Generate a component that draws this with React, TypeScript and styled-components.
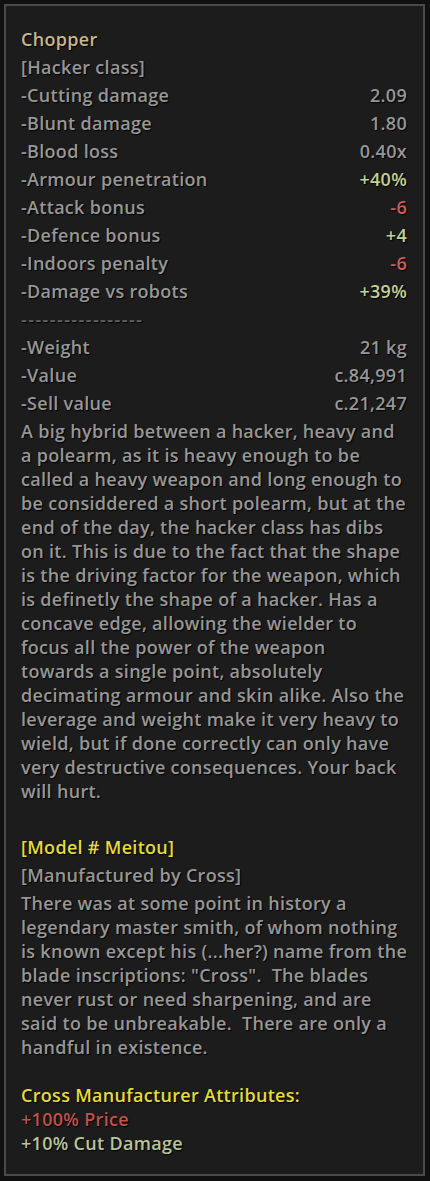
import React from "react";
import styled, { createGlobalStyle } from "styled-components";

const Global = createGlobalStyle`
  html, body { margin: 0; padding: 0; background: #0f0f0f; }
  * { box-sizing: border-box; }
`;

const Frame = styled.div`
  width: 430px;
  height: 1181px;
  padding: 4px 5px 5px 4px;
  background: #101010;
`;

const Panel = styled.div`
  height: 100%;
  border: 2px solid #4a4a4a;
  background: #1c1c1c;
  padding: 19px 16px 0 15px;
  font-family: "Open Sans", "Noto Sans", sans-serif;
  font-size: 18px;
  font-weight: 600;
  letter-spacing: 0.3px;
  color: #979797;
  text-shadow: 1px 1px 1px #000;
`;

const Row = styled.div<{ $color?: string; $mt?: number }>`
  display: flex;
  justify-content: space-between;
  height: 28px;
  line-height: 28px;
  margin-top: ${(p) => p.$mt ?? 0}px;
  color: ${(p) => p.$color || "#979797"};
  white-space: nowrap;
`;

const Dashes = styled.div`
  height: 28px;
  line-height: 28px;
  color: #626262;
  letter-spacing: 1.4px;
`;

const Value = styled.span<{ $color?: string }>`
  color: ${(p) => p.$color || "#979797"};
  letter-spacing: 0.3px;
`;

const Para = styled.div<{ $color?: string; $mt?: number }>`
  line-height: 24px;
  color: ${(p) => p.$color || "#979797"};
  margin-top: ${(p) => p.$mt ?? 0}px;
  white-space: pre;
`;

const Line = styled.div``;

const GREEN = "#c6cf95";
const RED = "#d35b59";
const YELLOW = "#e4dc3c";

const stats: [string, string, string?][] = [
  ["-Cutting damage", "2.09"],
  ["-Blunt damage", "1.80"],
  ["-Blood loss", "0.40x"],
  ["-Armour penetration", "+40%", GREEN],
  ["-Attack bonus", "-6", RED],
  ["-Defence bonus", "+4", GREEN],
  ["-Indoors penalty", "-6", RED],
  ["-Damage vs robots", "+39%", GREEN],
];

const desc = [
  "A big hybrid between a hacker, heavy and",
  "a polearm, as it is heavy enough to be",
  "called a heavy weapon and long enough to",
  "be considdered a short polearm, but at the",
  "end of the day, the hacker class has dibs",
  "on it. This is due to the fact that the shape",
  "is the driving factor for the weapon, which",
  "is definetly the shape of a hacker. Has a",
  "concave edge, allowing the wielder to",
  "focus all the power of the weapon",
  "towards a single point, absolutely",
  "decimating armour and skin alike. Also the",
  "leverage and weight make it very heavy to",
  "wield, but if done correctly can only have",
  "very destructive consequences. Your back",
  "will hurt.",
];

const lore = [
  "There was at some point in history a",
  "legendary master smith, of whom nothing",
  "is known except his (...her?) name from the",
  "blade inscriptions: \"Cross\".  The blades",
  "never rust or need sharpening, and are",
  "said to be unbreakable.  There are only a",
  "handful in existence.",
];

export default function App() {
  return (
    <>
      <Global />
      <Frame>
        <Panel>
          <Row $color="#c8b78e">Chopper</Row>
          <Row>[Hacker class]</Row>
          {stats.map(([l, v, c]) => (
            <Row key={l}>
              <span>{l}</span>
              <Value $color={c}>{v}</Value>
            </Row>
          ))}
          <Dashes>-----------------</Dashes>
          <Row>
            <span>-Weight</span>
            <Value>21 kg</Value>
          </Row>
          <Row>
            <span>-Value</span>
            <Value>c.84,991</Value>
          </Row>
          <Row>
            <span>-Sell value</span>
            <Value>c.21,247</Value>
          </Row>
          <Para $mt={2}>
            {desc.map((t) => (
              <Line key={t}>{t}</Line>
            ))}
          </Para>
          <Row $mt={30} $color={YELLOW}>[Model # Meitou]</Row>
          <Row>[Manufactured by Cross]</Row>
          <Para $mt={2}>
            {lore.map((t) => (
              <Line key={t}>{t}</Line>
            ))}
          </Para>
          <Para $mt={24} $color={YELLOW}>Cross Manufacturer Attributes:</Para>
          <Para $color="#c0514b">+100% Price</Para>
          <Para $color="#b9c59b">+10% Cut Damage</Para>
        </Panel>
      </Frame>
    </>
  );
}
